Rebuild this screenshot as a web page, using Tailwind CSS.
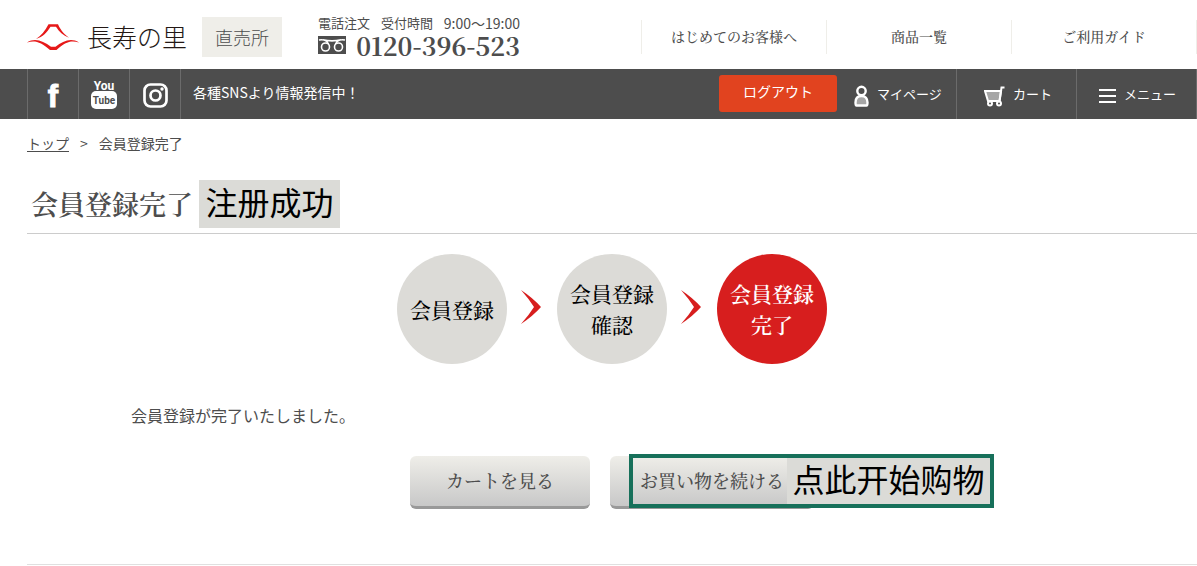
<!DOCTYPE html>
<html lang="ja">
<head>
    <meta charset="UTF-8">
    <meta name="viewport" content="width=device-width, initial-scale=1.0">
    <title>会員登録完了 | 長寿の里</title>
    <script src="https://cdn.jsdelivr.net/npm/@tailwindcss/browser@4"></script>
</head>
<body class="bg-white text-[#4d4d4d] text-sm font-['Noto_Sans_CJK_JP',sans-serif]">
    <!-- Header -->
    <header>
        <div class="flex items-center h-[69px] pl-[27px]">
            <a href="#" class="flex items-center shrink-0 mt-1">
                <svg class="w-[52px] h-[27px]" viewBox="0 0 52 27" fill="#e61919">
                    <path d="M9 16C14 13 18 8 21.500 1.300H31C34 8 38 12 42 14.700C36 12.500 32 9 29 3.800H23.500C20 9.500 16 14 9 16Z"/>
                    <path d="M0 19.500C8 14.500 16 18 24 23.700H28.500C36 18 44 14.500 52 19.500C44 17 38 19 29.500 27H23C14 19 8 17 0 19.500Z"/>
                </svg>
                <span class="ml-2 text-[25px] leading-8 pb-[2px] font-light text-[#231815]">長寿の里</span>
                <span class="ml-[15px] h-10 w-20 flex items-center justify-center bg-[#efeee9] text-lg font-light">直売所</span>
            </a>
            <div class="ml-9 shrink-0 w-[202px] whitespace-nowrap">
                <p class="flex justify-between items-center text-[13px] leading-5">
                    <span>電話注文</span><span>受付時間</span><span class="text-sm leading-5">9:00〜19:00</span>
                </p>
                <p class="flex items-center justify-between">
                    <svg class="w-[28px] h-[18px]" viewBox="0 0 28 18" fill="none">
                        <rect width="28" height="18" fill="#4d4d4d"/>
                        <g stroke="#fff" stroke-width="1.600">
                            <circle cx="7.500" cy="11" r="4"/>
                            <circle cx="20.500" cy="11" r="4"/>
                            <path d="M1 4C5 3 9 4.500 10.500 8M27 4C23 3 19 4.500 17.500 8M5 3.800C10 5 18 5 23 3.800"/>
                        </g>
                    </svg>
                    <a href="tel:0120396523" class="text-[25px] leading-6 font-bold font-['Noto_Serif_CJK_JP','Liberation_Serif',serif]">0120-396-523</a>
                </p>
            </div>
            <nav class="flex-1 grid grid-cols-3 ml-[121px] mt-1 border-r border-[#efeee9] font-medium font-['Noto_Serif_CJK_JP','Noto_Sans_CJK_JP',serif]">
                <a href="#" class="border-l border-[#efeee9] h-[34px] pb-[2px] flex items-center justify-center">はじめてのお客様へ</a>
                <a href="#" class="border-l border-[#efeee9] h-[34px] pb-[2px] flex items-center justify-center">商品一覧</a>
                <a href="#" class="border-l border-[#efeee9] h-[34px] pb-[2px] flex items-center justify-center">ご利用ガイド</a>
            </nav>
        </div>

        <!-- SNS + account bar -->
        <div class="flex items-center h-[50px] pl-[27px] bg-[#4d4d4d] text-white">
            <ul class="flex h-full border-r border-[#6b6b6b]">
                <li class="w-[51px] border-l border-[#6b6b6b]">
                    <a href="#" aria-label="Facebook" class="h-full flex items-center justify-center">
                        <svg class="w-6 h-[50px]" viewBox="0 0 24 50" fill="#fff">
                            <text x="12" y="38" text-anchor="middle" stroke="#fff" stroke-width="1" class="text-[31px] font-bold font-['Liberation_Sans',sans-serif]">f</text>
                        </svg>
                    </a>
                </li>
                <li class="w-[51px] border-l border-[#6b6b6b]">
                    <a href="#" aria-label="YouTube" class="h-full flex items-center justify-center">
                        <svg class="w-7 h-[50px]" viewBox="0 0 28 50">
                            <text x="14" y="21" text-anchor="middle" fill="#fff" class="text-xs font-bold font-['Roboto',sans-serif]">You</text>
                            <rect x="1" y="22" width="26" height="18" rx="5" fill="#fff"/>
                            <text x="14" y="35" text-anchor="middle" fill="#4d4d4d" class="text-[10px] font-bold font-['Roboto',sans-serif]">Tube</text>
                        </svg>
                    </a>
                </li>
                <li class="w-[51px] border-l border-[#6b6b6b]">
                    <a href="#" aria-label="Instagram" class="h-full flex items-center justify-center pt-[3px]">
                        <svg class="w-[25px] h-[25px]" viewBox="0 0 25 25" fill="none" stroke="#fff" stroke-width="2.700">
                            <rect x="1.500" y="1.500" width="22" height="22" rx="6"/>
                            <circle cx="12.500" cy="12.500" r="5"/>
                            <circle cx="19" cy="6" r="1.700" fill="#fff" stroke="none"/>
                        </svg>
                    </a>
                </li>
            </ul>
            <p class="ml-3 -mt-1">各種SNSより情報発信中！</p>
            <a href="#" class="ml-auto mr-4 mb-[2px] w-[118px] h-[37px] pb-1 flex items-center justify-center rounded-[3px] bg-[#e1431f]">ログアウト</a>
            <a href="#" class="h-full w-[103px] flex items-center text-[13px]">
                <svg class="w-4 h-[22px] mr-2 mt-1" viewBox="0 0 16 22" stroke="#fff" stroke-width="2.400">
                    <path d="M3.500 20.500C2.500 20.500 2.500 19.500 2.500 17.500C2.500 13.500 4.500 11 8.500 11S14.500 13.500 14.500 17.500C14.500 19.500 14.500 20.500 13.500 20.500Z" fill="#a6a6a6"/>
                    <circle cx="8.500" cy="6" r="4.200" fill="#4d4d4d"/>
                </svg>
                マイページ
            </a>
            <a href="#" class="h-full w-[120px] pl-[27px] border-l border-[#6b6b6b] flex items-center text-[13px]">
                <svg class="w-[21px] h-[21px] mr-2 mt-1" viewBox="0 0 21 21" fill="none" stroke="#fff" stroke-width="2">
                    <path d="M1 5H17L15.500 15H4Z" fill="#a6a6a6"/>
                    <path d="M20.500 1.500H17.500L15.500 15.500"/>
                    <circle cx="6" cy="17.500" r="2" fill="#4d4d4d"/>
                    <circle cx="15" cy="17.500" r="2" fill="#4d4d4d"/>
                </svg>
                カート
            </a>
            <button type="button" class="h-full w-[121px] pl-[22px] border-x border-[#6b6b6b] flex items-center text-[13px]">
                <svg class="w-[17px] h-[15px] mr-2 mt-1" viewBox="0 0 17 15" fill="#fff">
                    <rect width="17" height="2"/>
                    <rect y="6" width="17" height="2"/>
                    <rect y="12" width="17" height="2"/>
                </svg>
                メニュー
            </button>
        </div>
    </header>

    <main class="pl-[27px]">
        <nav class="flex gap-[11px] pt-[14px] leading-[21px]">
            <a href="#" class="underline underline-offset-2">トップ</a>
            <span>&gt;</span>
            <span>会員登録完了</span>
        </nav>

        <div class="flex items-center mt-[26px] pb-[5px] pl-1 border-b border-[#ccc]">
            <h1 class="text-[27px] font-semibold font-['Noto_Serif_CJK_JP','Noto_Sans_CJK_JP',serif]">会員登録完了</h1>
            <span lang="zh-CN" class="ml-[6px] w-[141px] h-12 pb-1 flex items-center justify-center bg-[#dbdbd7] text-black text-[32px] font-['Noto_Sans_CJK_SC',sans-serif]">注册成功</span>
        </div>

        <!-- Registration steps -->
        <ol class="flex justify-center items-center mt-5 text-[21px] leading-[31px] text-center text-black font-medium font-['Noto_Serif_CJK_JP','Noto_Sans_CJK_JP',serif]">
            <li class="size-[110px] rounded-full bg-[#dcdbd7] flex items-center justify-center">会員登録</li>
            <li class="w-[50px] flex justify-center pr-[3px] pb-1" aria-hidden="true">
                <svg class="w-5 h-[34px]" viewBox="0 0 20 34" fill="#d71e1e"><path d="M0 0Q12 8 20 17Q12 26 0 34Q8 25 13 17Q8 9 0 0Z"/></svg>
            </li>
            <li class="size-[110px] rounded-full bg-[#dcdbd7] flex items-center justify-center">会員登録<br>確認</li>
            <li class="w-[50px] flex justify-center pr-[3px] pb-1" aria-hidden="true">
                <svg class="w-5 h-[34px]" viewBox="0 0 20 34" fill="#d71e1e"><path d="M0 0Q12 8 20 17Q12 26 0 34Q8 25 13 17Q8 9 0 0Z"/></svg>
            </li>
            <li class="size-[110px] rounded-full bg-[#d71e1e] text-white font-semibold flex items-center justify-center">会員登録<br>完了</li>
        </ol>

        <p class="mt-[39px] ml-[104px] text-base">会員登録が完了いたしました。</p>

        <div class="flex justify-center gap-5 mt-[29px] text-lg font-medium font-['Noto_Serif_CJK_JP','Noto_Sans_CJK_JP',serif]">
            <button type="button" class="min-w-[180px] h-[53px] px-[30px] pb-[2px] rounded-md border-b-3 border-[#999] bg-linear-to-b from-[#efeee9] to-[#c8c8c8]">カートを見る</button>
            <div class="relative">
                <button type="button" class="h-[53px] px-[30px] pb-[2px] rounded-md border-b-3 border-[#999] bg-linear-to-b from-[#efeee9] to-[#c8c8c8]">お買い物を続ける</button>
                <div lang="zh-CN" class="absolute -top-0.5 left-[19px] w-[365px] h-[54px] border-4 border-[#17705a] flex justify-end pointer-events-none">
                    <span class="w-[203px] pb-1 flex items-center justify-center bg-[#dbdbd7] text-black text-[32px] font-normal whitespace-nowrap font-['Noto_Sans_CJK_SC',sans-serif]">点此开始购物</span>
                </div>
            </div>
        </div>

        <hr class="mt-[55px] border-[#e0e0e0]">
    </main>
</body>
</html>
